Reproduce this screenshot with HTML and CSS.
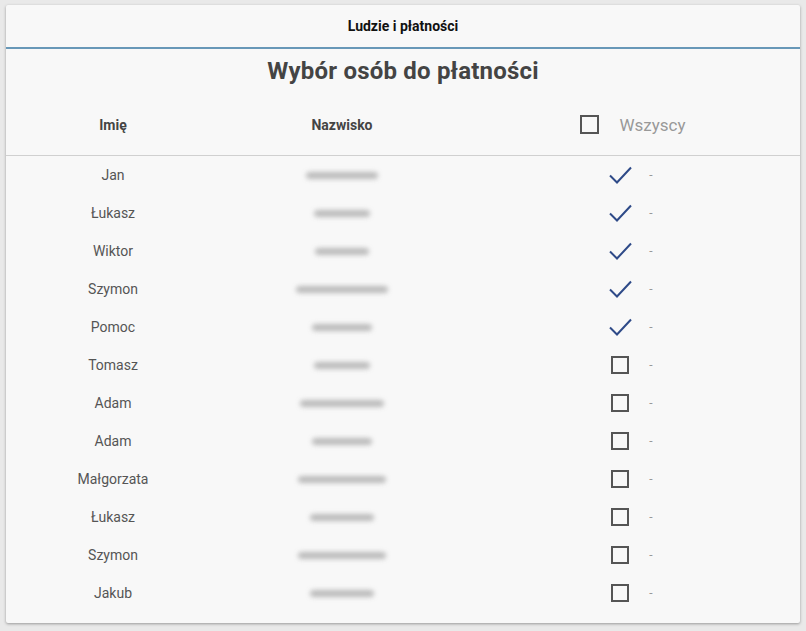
FILE: index.html
```html
<!DOCTYPE html>
<html lang="pl">
<head>
<meta charset="utf-8">
<title>Ludzie i płatności</title>
<link rel="stylesheet" href="styles.css">
</head>
<body>
<div class="card">
  <div class="topbar">Ludzie i płatności</div>
  <h1 class="title">Wybór osób do płatności</h1>
  <div class="table">
    <div class="th">Imię</div>
    <div class="th">Nazwisko</div>
    <div class="th th-all"><span class="box"></span><span class="all-label">Wszyscy</span></div>

    <div class="td">Jan</div>
    <div class="td"><span class="blur" style="width:72px"></span></div>
    <div class="td sel"><svg class="check" viewBox="0 0 24 24"><path d="M2 12.5 L9 19.5 L23 4.5"/></svg><span class="dash">-</span></div>

    <div class="td">Łukasz</div>
    <div class="td"><span class="blur" style="width:56px"></span></div>
    <div class="td sel"><svg class="check" viewBox="0 0 24 24"><path d="M2 12.5 L9 19.5 L23 4.5"/></svg><span class="dash">-</span></div>

    <div class="td">Wiktor</div>
    <div class="td"><span class="blur" style="width:54px"></span></div>
    <div class="td sel"><svg class="check" viewBox="0 0 24 24"><path d="M2 12.5 L9 19.5 L23 4.5"/></svg><span class="dash">-</span></div>

    <div class="td">Szymon</div>
    <div class="td"><span class="blur" style="width:92px"></span></div>
    <div class="td sel"><svg class="check" viewBox="0 0 24 24"><path d="M2 12.5 L9 19.5 L23 4.5"/></svg><span class="dash">-</span></div>

    <div class="td">Pomoc</div>
    <div class="td"><span class="blur" style="width:60px"></span></div>
    <div class="td sel"><svg class="check" viewBox="0 0 24 24"><path d="M2 12.5 L9 19.5 L23 4.5"/></svg><span class="dash">-</span></div>

    <div class="td">Tomasz</div>
    <div class="td"><span class="blur" style="width:56px"></span></div>
    <div class="td sel"><span class="box"></span><span class="dash">-</span></div>

    <div class="td">Adam</div>
    <div class="td"><span class="blur" style="width:84px"></span></div>
    <div class="td sel"><span class="box"></span><span class="dash">-</span></div>

    <div class="td">Adam</div>
    <div class="td"><span class="blur" style="width:60px"></span></div>
    <div class="td sel"><span class="box"></span><span class="dash">-</span></div>

    <div class="td">Małgorzata</div>
    <div class="td"><span class="blur" style="width:88px"></span></div>
    <div class="td sel"><span class="box"></span><span class="dash">-</span></div>

    <div class="td">Łukasz</div>
    <div class="td"><span class="blur" style="width:64px"></span></div>
    <div class="td sel"><span class="box"></span><span class="dash">-</span></div>

    <div class="td">Szymon</div>
    <div class="td"><span class="blur" style="width:88px"></span></div>
    <div class="td sel"><span class="box"></span><span class="dash">-</span></div>

    <div class="td">Jakub</div>
    <div class="td"><span class="blur" style="width:64px"></span></div>
    <div class="td sel"><span class="box"></span><span class="dash">-</span></div>
  </div>
</div>
</body>
</html>
```

FILE: styles.css
```css
html, body {
  margin: 0;
  padding: 0;
  background: #e9e9e9;
}
body {
  padding: 5px 6px 8px 6px;
  font-family: Roboto, "Liberation Sans", sans-serif;
  color: #555;
}
.card {
  background: #f8f8f8;
  box-shadow: 0 1px 3px rgba(0,0,0,0.35);
  border-radius: 2px;
  padding-bottom: 11px;
}
.topbar {
  height: 42px;
  line-height: 42px;
  text-align: center;
  font-size: 14px;
  font-weight: 700;
  color: #111;
  border-bottom: 2px solid #6898b8;
}
.title {
  margin: 0;
  padding-top: 7px;
  height: 31px;
  line-height: 31px;
  text-align: center;
  font-size: 24px;
  font-weight: 700;
  color: #444;
  letter-spacing: 0.2px;
}
.table {
  display: grid;
  grid-template-columns: 214px 244px 1fr;
  grid-template-rows: 69px;
  grid-auto-rows: 38px;
}
.th {
  display: flex;
  align-items: center;
  justify-content: center;
  font-size: 14px;
  font-weight: 700;
  color: #444;
  border-bottom: 1px solid #d0d0d0;
  padding-top: 7px;
  box-sizing: border-box;
  height: 69px;
}
.th-all {
  gap: 20px;
  font-weight: 400;
  padding-left: 2px;
}
.all-label {
  font-size: 17px;
  color: #999;
}
.td {
  display: flex;
  align-items: center;
  justify-content: center;
  font-size: 14px;
  color: #555;
}
.sel {
  gap: 20px;
}
.box {
  width: 14px;
  height: 14px;
  border: 2px solid #555;
  display: inline-block;
}
.th-all .box {
  width: 15px;
  height: 15px;
}
.check {
  width: 26px;
  height: 24px;
  fill: none;
  stroke: #2e4a88;
  stroke-width: 2;
  margin-left: -4px;
  margin-right: -4px;
}
.dash {
  font-size: 12px;
  color: #999;
}
.blur {
  display: inline-block;
  height: 7px;
  background: #b0b0b0;
  border-radius: 4px;
  filter: blur(2.5px);
  opacity: 0.85;
}
```
